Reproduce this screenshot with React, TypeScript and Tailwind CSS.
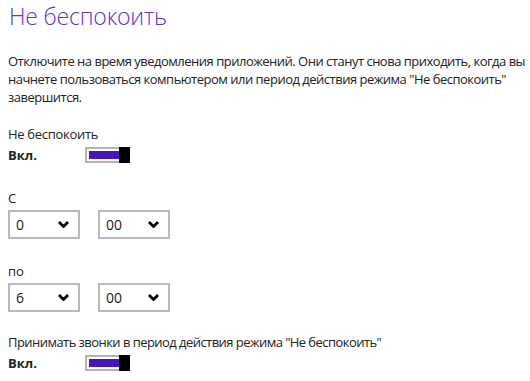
const Toggle = () => {
  return <div className="relative w-[45px] h-[16px] border-2 border-[#b4b4b4] bg-white p-[2px]">
      <div className="h-full w-[30px] bg-[#4617b4]" />
      <div className="absolute -top-[2px] -right-[2px] w-[11px] h-[16px] bg-black" />
    </div>;
};

const Chevron = () => <svg width="11" height="7" viewBox="0 0 11 7" className="shrink-0">
    <path d="M1 1 L5.5 5.5 L10 1" fill="none" stroke="#000" strokeWidth="2.8" />
  </svg>;

const Select = ({
  value
}: {
  value: string;
}) => {
  return <div className="w-[72px] h-[29px] border-2 border-[#b9b9b9] flex items-center justify-between pl-[6px] pr-[9px] text-[14px] text-[#1a1a1a]">
      <span>{value}</span>
      <Chevron />
    </div>;
};

export default function App() {
  return <div className="w-[530px] h-[381px] bg-white overflow-hidden pl-[8px] text-[#222] text-[13px] leading-[18px]" style={{
    fontFamily: '"Open Sans", "Noto Sans", sans-serif'
  }}>
      {/* Header */}
      <h1 className="text-[23px] leading-[32px] font-light text-[#5b33c8] pl-[1px] tracking-[-0.2px]">
        Не беспокоить
      </h1>

      <p className="mt-[20px] whitespace-nowrap tracking-[-0.5px]">
        Отключите на время уведомления приложений. Они станут снова приходить, когда вы
        <br />
        начнете пользоваться компьютером или период действия режима "Не беспокоить"
        <br />
        завершится.
      </p>

      {/* Quiet hours */}
      <div className="mt-[19px] tracking-[-0.3px]">Не беспокоить</div>
      <div className="flex items-center h-[20px] mt-[2px]">
        <span className="font-bold w-[77px]">Вкл.</span>
        <Toggle />
      </div>

      <div className="mt-[24px]">С</div>
      <div className="flex gap-[18px] mt-[3px]">
        <Select value="0" />
        <Select value="00" />
      </div>

      <div className="mt-[23px]">по</div>
      <div className="flex gap-[18px] mt-[3px]">
        <Select value="6" />
        <Select value="00" />
      </div>

      <div className="mt-[21px] tracking-[-0.55px] whitespace-nowrap">
        Принимать звонки в период действия режима "Не беспокоить"
      </div>
      <div className="flex items-center h-[20px] mt-[2px]">
        <span className="font-bold w-[77px]">Вкл.</span>
        <Toggle />
      </div>
    </div>;
}
